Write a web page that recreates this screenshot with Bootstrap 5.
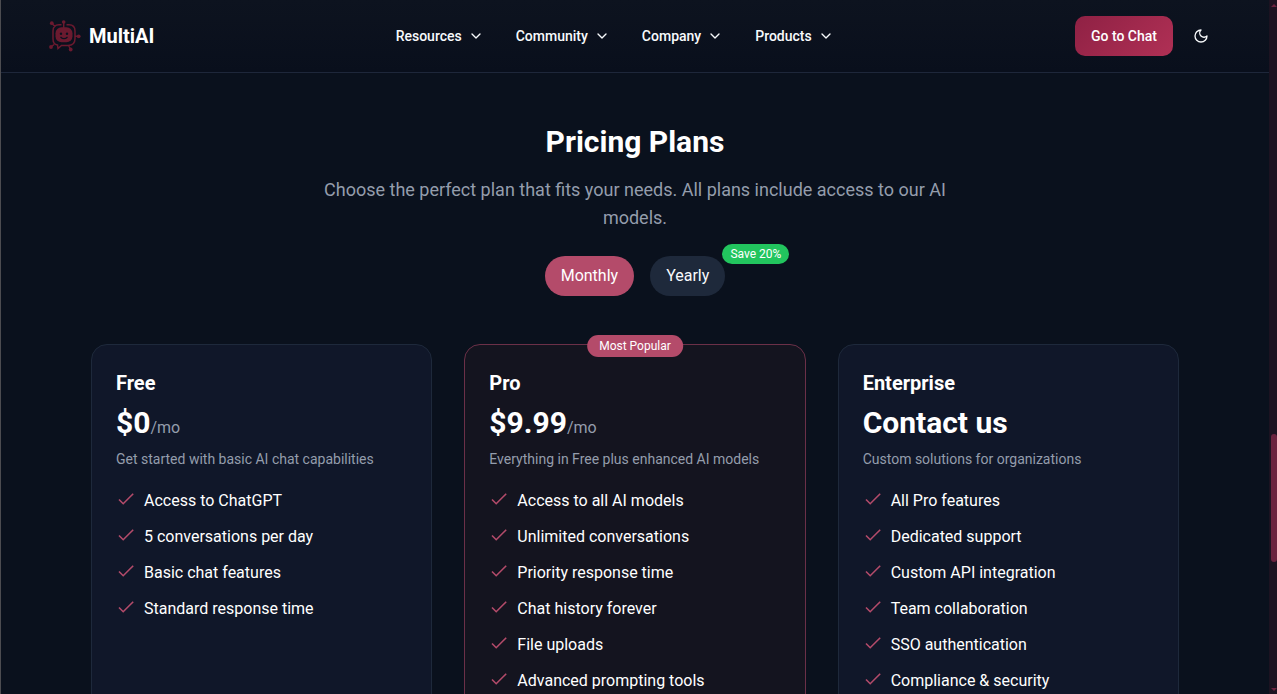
<!DOCTYPE html>
<html lang="en" data-bs-theme="dark">
<head>
<meta charset="utf-8">
<meta name="viewport" content="width=device-width, initial-scale=1">
<title>MultiAI – Pricing Plans</title>
<link href="https://cdn.jsdelivr.net/npm/bootstrap@5.3.0/dist/css/bootstrap.min.css" rel="stylesheet">
<style>
  body { font-family: Roboto, "Liberation Sans", sans-serif; background: #0a111d; color: #fff; }
  .page-frame { border-left: 1px solid #4c4c50; }
  .site-header { background: linear-gradient(#0d131f, #090f1c); border-bottom: 1px solid #1e273a; }
  .brand-name { font-size: 20px; line-height: 28px; font-weight: 700; }
  .menu-btn, .chat-btn { font-size: 14px; line-height: 20px; font-weight: 500; height: 40px; }
  .menu-btn { gap: 6px; border: 0; color: #f8fafc; padding: 0 16px; }
  .chat-btn { background: linear-gradient(135deg, #8f2144, #b03055); color: #fff; border: 0; border-radius: 10px; padding: 0 16px; }
  .theme-btn { width: 40px; height: 40px; border: 0; color: #f8fafc; }
  .menu-btn:hover, .chat-btn:hover, .theme-btn:hover { color: #fff; opacity: .85; }
  .pricing { padding: 51px 24px 48px; }
  .pricing-title { font-size: 30px; line-height: 36px; font-weight: 700; }
  .pricing-intro { font-size: 18px; line-height: 28px; max-width: 672px; color: #949dac; }
  .cycle-btn { line-height: 24px; padding: 8px 16px; border: 0; background: #1e293b; color: #f8fafc; }
  .cycle-btn.selected { background: #b44b6a; color: #fff; }
  .save-tag { top: -12px; right: -64px; font-size: 12px; line-height: 16px; padding: 2px 8px; background: #22c55e; }
  .plans { max-width: 1088px; display: grid; grid-template-columns: repeat(3, 1fr); gap: 32px; }
  .plan { background: #101729; border: 1px solid #1e293b; border-radius: 16px; padding: 24px; }
  .plan-pro { background: #14141f; border-color: #6b3048; }
  .popular-tag { top: -10px; font-size: 12px; line-height: 16px; padding: 3px 12px; background: #b44b6a; }
  .plan-name { font-size: 20px; line-height: 28px; font-weight: 700; }
  .plan-price { font-size: 30px; line-height: 36px; font-weight: 700; }
  .plan-price span { font-size: 16px; line-height: 24px; font-weight: 400; color: #949dac; }
  .plan-note { font-size: 14px; line-height: 20px; color: #949dac; }
  .features { display: grid; gap: 12px; line-height: 24px; margin-top: 20px; }
  .features svg { color: #b44b6a; }
  .scroll-track { width: 8px; background: #1c1321; padding: 4px 0 3px 2px; color: #6b233f; }
  .scroll-thumb { top: 62.5%; height: 18.5%; right: 0; width: 6px; background: #6b233f; border-radius: 3px; }
  @media (max-width: 900px) { .plans { grid-template-columns: 1fr; } }
</style>
</head>
<body>
<svg class="d-none" aria-hidden="true">
  <symbol id="chev" viewBox="0 0 24 24"><path d="m6 9 6 6 6-6" fill="none" stroke="currentColor" stroke-width="2" stroke-linecap="round" stroke-linejoin="round"/></symbol>
  <symbol id="tick" viewBox="0 0 20 20"><path d="M3 10.500 7.200 14.700 17.200 4.700" fill="none" stroke="currentColor" stroke-width="1.600"/></symbol>
</svg>
<div class="d-flex vh-100 overflow-hidden page-frame">
  <div class="flex-grow-1 overflow-hidden">
    <header class="site-header d-flex align-items-center justify-content-between px-5 py-3">
      <a href="#" class="d-flex align-items-center gap-2 text-white text-decoration-none">
        <svg width="32" height="32" viewBox="0 0 32 32" fill="none" stroke="#6b1a2f" stroke-width="1.500" aria-hidden="true">
          <path d="M12.500 4.700H10Q4 4.700 4 11v8q0 5.300 4.500 6l.5 3.500L12.500 25.500H19q7 0 7-7V11q0-6.300-6-6.300h-2.500M14.700 2v6M3 3.500l3 3M26 16.300h3.500M5 24.500 2 27M19.500 25.500l2 3.500"/>
          <rect x="6.500" y="7.200" width="17" height="15" rx="6" fill="#6b1a2f" stroke="none"/>
          <g fill="#6b1a2f" stroke="none"><circle cx="14.700" cy="2" r="1.800"/><circle cx="2.800" cy="3.200" r="1.900"/><circle cx="29.700" cy="16.300" r="1.900"/><circle cx="2" cy="27" r="1.900"/><circle cx="21.700" cy="29.500" r="1.900"/></g>
          <g fill="#0c1220" stroke="none"><circle cx="12" cy="13.700" r="1.200"/><circle cx="18" cy="13.700" r="1.200"/></g>
          <path d="M11.500 17q3.500 3.500 7 0" stroke="#0c1220" stroke-width="1.200"/>
        </svg>
        <span class="brand-name">MultiAI</span>
      </a>
      <nav class="d-flex" aria-label="Main">
        <button type="button" class="btn menu-btn d-flex align-items-center">Resources<svg width="16" height="16"><use href="#chev"/></svg></button>
        <button type="button" class="btn menu-btn d-flex align-items-center">Community<svg width="16" height="16"><use href="#chev"/></svg></button>
        <button type="button" class="btn menu-btn d-flex align-items-center">Company<svg width="16" height="16"><use href="#chev"/></svg></button>
        <button type="button" class="btn menu-btn d-flex align-items-center">Products<svg width="16" height="16"><use href="#chev"/></svg></button>
      </nav>
      <div class="d-flex gap-2">
        <button type="button" class="btn chat-btn">Go to Chat</button>
        <button type="button" class="btn theme-btn d-flex align-items-center justify-content-center p-0" aria-label="Toggle theme">
          <svg width="16" height="16" viewBox="0 0 24 24" fill="none" stroke="currentColor" stroke-width="2" stroke-linejoin="round"><path d="M12 3a6 6 0 0 0 9 9 9 9 0 1 1-9-9Z"/></svg>
        </button>
      </div>
    </header>

    <main class="pricing">
      <h1 class="pricing-title text-center mb-3">Pricing Plans</h1>
      <p class="pricing-intro text-center mx-auto mb-4">Choose the perfect plan that fits your needs. All plans include access to our AI models.</p>
      <div class="d-flex justify-content-center gap-3 mb-5">
        <button type="button" class="btn cycle-btn selected rounded-pill">Monthly</button>
        <button type="button" class="btn cycle-btn rounded-pill position-relative">Yearly<span class="save-tag position-absolute rounded-pill text-white text-nowrap">Save 20%</span></button>
      </div>

      <div class="plans mx-auto">
        <section class="plan">
          <h2 class="plan-name mb-2">Free</h2>
          <div class="plan-price mb-2">$0<span>/mo</span></div>
          <p class="plan-note mb-0">Get started with basic AI chat capabilities</p>
          <ul class="features list-unstyled mb-0">
            <li class="d-flex gap-2"><svg width="20" height="20"><use href="#tick"/></svg>Access to ChatGPT</li>
            <li class="d-flex gap-2"><svg width="20" height="20"><use href="#tick"/></svg>5 conversations per day</li>
            <li class="d-flex gap-2"><svg width="20" height="20"><use href="#tick"/></svg>Basic chat features</li>
            <li class="d-flex gap-2"><svg width="20" height="20"><use href="#tick"/></svg>Standard response time</li>
          </ul>
        </section>
        <section class="plan plan-pro position-relative">
          <span class="popular-tag position-absolute start-50 translate-middle-x rounded-pill text-white text-nowrap">Most Popular</span>
          <h2 class="plan-name mb-2">Pro</h2>
          <div class="plan-price mb-2">$9.99<span>/mo</span></div>
          <p class="plan-note mb-0">Everything in Free plus enhanced AI models</p>
          <ul class="features list-unstyled mb-0">
            <li class="d-flex gap-2"><svg width="20" height="20"><use href="#tick"/></svg>Access to all AI models</li>
            <li class="d-flex gap-2"><svg width="20" height="20"><use href="#tick"/></svg>Unlimited conversations</li>
            <li class="d-flex gap-2"><svg width="20" height="20"><use href="#tick"/></svg>Priority response time</li>
            <li class="d-flex gap-2"><svg width="20" height="20"><use href="#tick"/></svg>Chat history forever</li>
            <li class="d-flex gap-2"><svg width="20" height="20"><use href="#tick"/></svg>File uploads</li>
            <li class="d-flex gap-2"><svg width="20" height="20"><use href="#tick"/></svg>Advanced prompting tools</li>
          </ul>
        </section>
        <section class="plan">
          <h2 class="plan-name mb-2">Enterprise</h2>
          <div class="plan-price mb-2">Contact us</div>
          <p class="plan-note mb-0">Custom solutions for organizations</p>
          <ul class="features list-unstyled mb-0">
            <li class="d-flex gap-2"><svg width="20" height="20"><use href="#tick"/></svg>All Pro features</li>
            <li class="d-flex gap-2"><svg width="20" height="20"><use href="#tick"/></svg>Dedicated support</li>
            <li class="d-flex gap-2"><svg width="20" height="20"><use href="#tick"/></svg>Custom API integration</li>
            <li class="d-flex gap-2"><svg width="20" height="20"><use href="#tick"/></svg>Team collaboration</li>
            <li class="d-flex gap-2"><svg width="20" height="20"><use href="#tick"/></svg>SSO authentication</li>
            <li class="d-flex gap-2"><svg width="20" height="20"><use href="#tick"/></svg>Compliance &amp; security</li>
          </ul>
        </section>
      </div>
    </main>
  </div>
  <div class="scroll-track position-relative flex-shrink-0 d-flex flex-column justify-content-between" aria-hidden="true">
    <svg width="6" height="3"><path d="M0 3 3 0 6 3Z" fill="currentColor"/></svg>
    <div class="scroll-thumb position-absolute"></div>
    <svg width="6" height="3"><path d="M0 0 3 3 6 0Z" fill="currentColor"/></svg>
  </div>
</div>
<script src="https://cdn.jsdelivr.net/npm/bootstrap@5.3.0/dist/js/bootstrap.bundle.min.js"></script>
</body>
</html>
